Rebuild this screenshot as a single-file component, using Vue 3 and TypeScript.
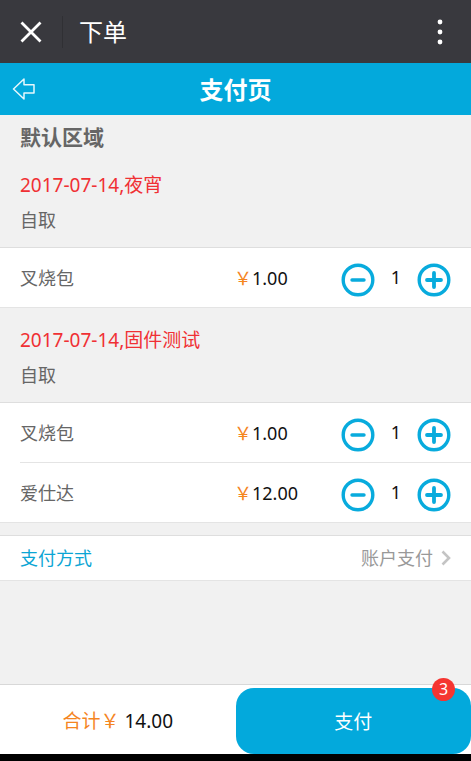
<script setup lang="ts">
import { computed, reactive } from 'vue'

interface Item {
  name: string
  price: number
  count: number
}

interface Group {
  title: string
  pickup: string
  items: Item[]
}

const groups = reactive<Group[]>([
  {
    title: '2017-07-14,夜宵',
    pickup: '自取',
    items: [{ name: '叉烧包', price: 1, count: 1 }],
  },
  {
    title: '2017-07-14,固件测试',
    pickup: '自取',
    items: [
      { name: '叉烧包', price: 1, count: 1 },
      { name: '爱仕达', price: 12, count: 1 },
    ],
  },
])

const allItems = computed(() => groups.flatMap((g) => g.items))
const total = computed(() => allItems.value.reduce((sum, i) => sum + i.price * i.count, 0))
const quantity = computed(() => allItems.value.reduce((sum, i) => sum + i.count, 0))

function change(item: Item, step: number) {
  item.count = Math.max(0, item.count + step)
}
</script>

<template>
  <div class="page">
    <header class="topbar">
      <button class="plain close" type="button" aria-label="关闭">
        <svg width="22" height="22" viewBox="0 0 22 22">
          <path d="M1.5 1.5 20.5 20.5M20.5 1.5 1.5 20.5" fill="none" stroke="#fff" stroke-width="2.8" />
        </svg>
      </button>
      <span class="topbar-title">下单</span>
      <button class="plain more" type="button" aria-label="更多">
        <svg width="6" height="26" viewBox="0 0 6 26">
          <circle cx="3" cy="3" r="2.4" fill="#fff" />
          <circle cx="3" cy="13" r="2.4" fill="#fff" />
          <circle cx="3" cy="23" r="2.4" fill="#fff" />
        </svg>
      </button>
    </header>

    <nav class="navbar">
      <button class="plain" type="button" aria-label="返回">
        <svg width="24" height="22" viewBox="0 0 24 22">
          <path
            d="M1.5 11 12 1V6.8H22V15H12V21Z"
            fill="none"
            stroke="#e6f7fc"
            stroke-width="1.5"
            stroke-linejoin="round"
          />
        </svg>
      </button>
      <h1>支付页</h1>
    </nav>

    <main>
      <h2 class="area">默认区域</h2>

      <section v-for="group in groups" :key="group.title">
        <div class="group-head">
          <h3>{{ group.title }}</h3>
          <p>{{ group.pickup }}</p>
        </div>
        <ul class="items">
          <li v-for="item in group.items" :key="item.name">
            <span class="name">{{ item.name }}</span>
            <span class="price"><span class="yen">￥</span>{{ item.price.toFixed(2) }}</span>
            <div class="stepper">
              <button class="plain" type="button" aria-label="减少" @click="change(item, -1)">
                <svg width="34" height="34" viewBox="0 0 34 34">
                  <circle cx="17" cy="17" r="14.8" fill="none" stroke="#08abdd" stroke-width="3.4" />
                  <path d="M11 17H23" stroke="#08abdd" stroke-width="3.4" stroke-linecap="round" />
                </svg>
              </button>
              <output>{{ item.count }}</output>
              <button class="plain" type="button" aria-label="增加" @click="change(item, 1)">
                <svg width="34" height="34" viewBox="0 0 34 34">
                  <circle cx="17" cy="17" r="14.8" fill="none" stroke="#08abdd" stroke-width="3.4" />
                  <path
                    d="M10 17H24M17 10V24"
                    stroke="#08abdd"
                    stroke-width="3.8"
                    stroke-linecap="round"
                  />
                </svg>
              </button>
            </div>
          </li>
        </ul>
      </section>

      <a class="method" href="#">
        <span class="method-label">支付方式</span>
        <span class="method-value">账户支付</span>
        <svg width="10" height="16" viewBox="0 0 10 16">
          <path d="M1.5 1.5 8 8 1.5 14.5" fill="none" stroke="#c4c4c4" stroke-width="2.6" />
        </svg>
      </a>
    </main>

    <footer class="footer">
      <div class="total"><span class="yen">合计￥</span> {{ total.toFixed(2) }}</div>
      <div class="pay-wrap">
        <button class="pay" type="button">支付</button>
        <span class="badge">{{ quantity }}</span>
      </div>
    </footer>
  </div>
</template>

<style>
body {
  margin: 0;
  background: #f0f0f0;
}
</style>

<style scoped>
.page {
  box-sizing: border-box;
  display: flex;
  flex-direction: column;
  min-height: 100vh;
  border-bottom: 7px solid #000;
  background: #f1f1f1;
  color: #666;
  font-family: 'Noto Sans', 'Noto Sans CJK SC', sans-serif;
  font-size: 18px;
  line-height: 24px;
}

h1,
h2,
h3,
p,
ul {
  margin: 0;
  padding: 0;
}

svg {
  display: block;
}

.plain {
  padding: 0;
  border: 0;
  background: none;
}

.topbar {
  display: flex;
  align-items: center;
  height: 63px;
  background: #39393e;
  color: #fff;
}

.close {
  display: flex;
  align-items: center;
  height: 32px;
  padding: 0 20px;
  border-right: 1px solid #303034;
}

.topbar-title {
  flex: 1;
  padding-left: 16px;
  font-size: 24px;
  line-height: 32px;
}

.more {
  padding: 0 28px;
}

.navbar {
  display: grid;
  grid-template-columns: 36px 1fr 36px;
  align-items: center;
  box-sizing: border-box;
  height: 52px;
  padding: 0 12px;
  background: #03a9dc;
  color: #fff;
}

.navbar h1 {
  padding-top: 2px;
  font-size: 24px;
  line-height: 32px;
  text-align: center;
}

main {
  flex: 1;
}

.area {
  padding: 8px 20px 2px;
  font-size: 21px;
  line-height: 28px;
}

.group-head {
  padding: 18px 20px 15px;
}

.group-head h3 {
  margin-bottom: 9px;
  color: #f03034;
  font-size: 19px;
  font-weight: 400;
  line-height: 28px;
}

.items {
  border-top: 1px solid #dedede;
  border-bottom: 1px solid #e4e4e4;
  background: #fff;
  list-style: none;
}

.items li {
  display: flex;
  align-items: center;
  box-sizing: border-box;
  height: 59px;
  margin-left: 20px;
  padding-right: 20px;
}

.items li + li {
  height: 60px;
  border-top: 1px solid #e4e4e4;
}

.name {
  width: 214px;
}

.price {
  flex: 1;
  color: #111;
}

.yen {
  color: #f5851f;
}

.stepper {
  display: flex;
  align-items: center;
  padding-top: 4px;
}

.stepper output {
  width: 42px;
  padding-bottom: 6px;
  color: #111;
  text-align: center;
}

.method {
  display: flex;
  align-items: center;
  height: 44px;
  margin-top: 12px;
  padding: 0 20px;
  border-top: 1px solid #dedede;
  border-bottom: 1px solid #e4e4e4;
  background: #fff;
  color: #999;
  text-decoration: none;
}

.method-label {
  flex: 1;
  color: #0ba5d4;
}

.method-value {
  margin-right: 8px;
}

.footer {
  display: grid;
  grid-template-columns: 1fr 1fr;
  border-top: 1px solid #d8d8d8;
  background: #fff;
}

.total {
  align-self: center;
  padding-top: 2px;
  color: #111;
  font-size: 19px;
  line-height: 28px;
  text-align: center;
}

.pay-wrap {
  position: relative;
  padding-top: 3px;
}

.pay {
  display: block;
  width: 100%;
  height: 66px;
  border: 0;
  border-radius: 18px;
  background: #03a9dc;
  color: #fff;
  font-family: inherit;
  font-size: 19px;
}

.badge {
  position: absolute;
  top: -7px;
  right: 16px;
  width: 23px;
  border-radius: 50%;
  background: #f53531;
  color: #fff;
  font-size: 16px;
  line-height: 23px;
  text-align: center;
}
</style>
